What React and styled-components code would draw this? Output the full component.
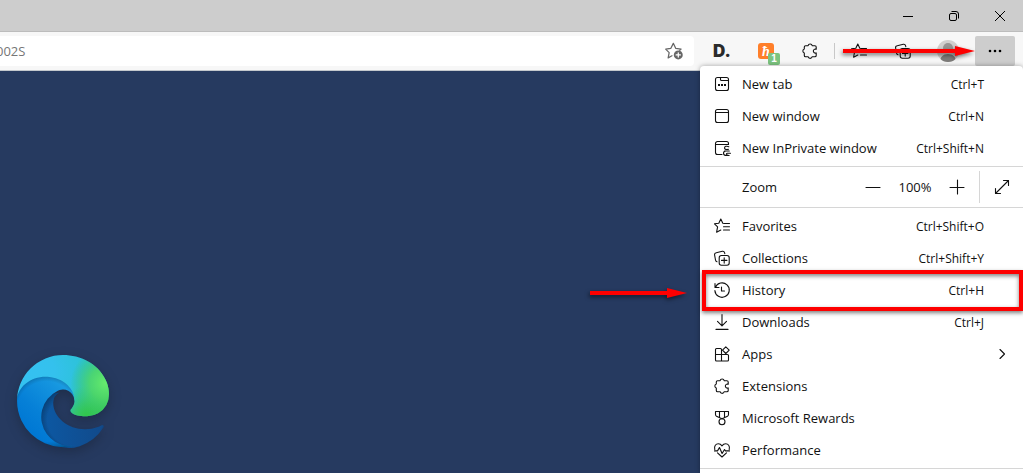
import React from 'react'
import styled, { createGlobalStyle, css } from 'styled-components'

const GlobalStyle = createGlobalStyle`
  * {
    box-sizing: border-box;
  }

  body {
    margin: 0;
    font-family: 'Open Sans', 'Noto Sans', sans-serif;
    font-size: 13px;
    color: #111;
  }

  button, input {
    font: inherit;
    color: inherit;
    border: 0;
    padding: 0;
    background: none;
  }

  svg {
    display: block;
    flex: none;
    overflow: visible;
  }
`

const Browser = styled.div`
  display: flex;
  flex-direction: column;
  min-height: 100vh;
  overflow: hidden;
  background: #263a60;
`

const TitleBar = styled.header`
  display: flex;
  justify-content: flex-end;
  height: 32px;
  background: #cdcdcd;
  border-bottom: 1px solid #bcbcbc;
`

const WindowButton = styled.button`
  display: flex;
  justify-content: center;
  align-items: center;
  width: 46px;
`

const Toolbar = styled.div`
  position: relative;
  display: flex;
  align-items: center;
  height: 39px;
  padding-right: 8px;
  background: #f7f7f7;
  border-bottom: 1px solid #c4c8cd;
`

const AddressBar = styled.form`
  display: flex;
  align-items: center;
  flex: 1;
  height: 30px;
  margin-left: -12px;
  margin-right: 6px;
  padding: 0 8px;
  background: #fff;
  border-radius: 4px;
`

const AddressInput = styled.input`
  flex: 1;
  min-width: 0;
  color: #767676;
  outline: none;
`

const ToolButton = styled.button`
  position: relative;
  display: flex;
  justify-content: center;
  align-items: center;
  width: 44px;
  height: 30px;
`

const StarButton = styled(ToolButton)`
  width: 24px;
  color: #666;
`

const ProfileButton = styled(ToolButton)`
  width: 46px;
`

const MoreButton = styled(ToolButton)`
  width: 40px;
  margin-left: 4px;
  background: #cdcdcd;
  border-radius: 2px;
`

const ToolDivider = styled.span`
  width: 1px;
  height: 16px;
  margin: 0 2px;
  background: #c8c8c8;
`

const Badge = styled.span`
  position: absolute;
  right: 8px;
  bottom: 1px;
  width: 12px;
  height: 12px;
  border-radius: 2px;
  background: #7cc47f;
  color: #fff;
  font: bold 10px/12px 'Liberation Sans', sans-serif;
  text-align: center;
`

const Page = styled.main`
  display: flex;
  flex: 1;
  align-items: flex-end;
  padding: 0 17px 26px;

  svg {
    filter: drop-shadow(0 4px 6px rgba(20, 28, 40, 0.4));
  }
`

const Menu = styled.div`
  position: absolute;
  top: 34px;
  right: 0;
  z-index: 1;
  width: 323px;
  padding-bottom: 4px;
  background: #fff;
  border-radius: 4px 4px 0 0;
  box-shadow: 0 0 5px rgba(0, 0, 0, 0.35);
`

const MenuGroup = styled.div`
  display: flex;
  flex-direction: column;
  padding: 2px 0;
  border-bottom: 1px solid #d6d6d6;
`

const MenuRow = styled.button`
  position: relative;
  display: flex;
  align-items: center;
  gap: 12px;
  height: 32px;
  padding: 0 39px 0 14px;
  text-align: left;

  ${props => props.$marked && css`
    z-index: 1;

    &::after {
      content: '';
      position: absolute;
      inset: -4px 0 -5px 2px;
      border: 4px solid #fe0000;
      box-shadow: 0 2px 4px rgba(0, 0, 0, 0.5), inset 0 2px 4px rgba(0, 0, 0, 0.5);
    }
  `}

  ${props => props.$submenu && css`
    padding-right: 13px;
  `}
`

const Label = styled.span`
  flex: 1;
`

const Shortcut = styled.span`
  font-size: 12px;
`

const ZoomRow = styled.div`
  display: flex;
  align-items: center;
  height: 41px;
  padding-left: 42px;
  border-bottom: 1px solid #d6d6d6;
`

const ZoomButton = styled.button`
  display: flex;
  justify-content: center;
  align-items: center;
  width: 32px;
  height: 32px;
`

const ZoomValue = styled.output`
  width: 52px;
  text-align: center;
`

const FullScreenButton = styled(ZoomButton)`
  width: 44px;
  margin-left: 6px;
  border-left: 1px solid #d6d6d6;
`

const Pointer = styled.svg`
  position: absolute;
  top: 14px;
  z-index: 2;
  pointer-events: none;
  filter: drop-shadow(-1px 2px 2px rgba(0, 0, 0, 0.55));
`

const MorePointer = styled(Pointer)`
  right: 48px;
`

const RowPointer = styled(Pointer)`
  right: 336px;
`

const Icon = ({ size = 16, children }) => (
  <svg
    width={size}
    height={size}
    viewBox="0 0 16 16"
    fill="none"
    stroke="currentColor"
    strokeWidth="1.1"
    strokeLinecap="round"
    strokeLinejoin="round"
    aria-hidden="true"
  >
    {children}
  </svg>
)

const icons = {
  newTab: (
    <>
      <rect x="1.5" y="1.5" width="13" height="13" rx="2" />
      <path d="M6.5 1.5v2a1 1 0 0 0 1 1h7" />
      <path d="M4 9h2M7 9h2M10 9h2" strokeWidth="1.8" strokeLinecap="butt" />
    </>
  ),
  newWindow: (
    <>
      <rect x="1.5" y="1.5" width="13" height="13" rx="2" />
      <path d="M1.5 4.5h13" />
    </>
  ),
  inPrivate: (
    <>
      <path d="M8 14.5H3.5a2 2 0 0 1-2-2v-9a2 2 0 0 1 2-2h9a2 2 0 0 1 2 2v1M1.5 4.5h13" />
      <path d="M14.8 6.7c-2-1-4.3-.4-4.3 1.3s2 1.6 4 1.3M10.5 11h4.8M9.5 13.2c0-1.2.8-2.2 2.4-2.2M9.5 13.2c0 1.6 1.5 2.3 3.4 2.3M16.5 13.2h-3.2c-1.2 0-1.2 2.3 1.8 2.3" />
    </>
  ),
  favorites: (
    <path d="M10.5 5.5 8.8 5.2 6.8 1 4.8 5.2.5 5.8l3.1 3-1 5.4 4.2-2.1M10.5 5.5h5M9.5 8.8h6M9.5 12h6" />
  ),
  collections: (
    <>
      <path d="M3 11.8A2.2 2.2 0 0 1 1.5 10L.6 5a2 2 0 0 1 1.6-2.3L8.3 1.3a2 2 0 0 1 2.3 1.5l.2.8" />
      <rect x="5.2" y="5.5" width="10" height="9.8" rx="2.2" />
      <path d="M10.2 7.7v5.4M7.5 10.4h5.4" />
    </>
  ),
  history: (
    <>
      <path d="M1 1.5v4h4M1.4 5.4A7.2 7.2 0 1 1 .9 8.6" />
      <path d="M7.5 5v4h3" />
    </>
  ),
  downloads: <path d="M8 .5v11M3.5 7.3 8 11.8l4.5-4.5M2 15.4h12" />,
  apps: (
    <>
      <path d="M7.5 8.5V3.5a1 1 0 0 0-1-1h-4a1 1 0 0 0-1 1V14a1 1 0 0 0 1 1h11a1 1 0 0 0 1-1V9.5a1 1 0 0 0-1-1h-12M7.5 8.5V15" />
      <path d="m11.8.8 3.4 3.3-3.4 3.4-3.3-3.4z" />
    </>
  ),
  extensions: (
    <path d="M3.6 2.7h2.5a2.1 2.1 0 0 1 4.1 0h2.7a1.3 1.3 0 0 1 1.3 1.3v2.3a2 2 0 1 0 0 3.6v2.5a1.3 1.3 0 0 1-1.3 1.3h-2.7a2.1 2.1 0 0 1-4.1 0H3.6a1.3 1.3 0 0 1-1.3-1.3V10a2.1 2.1 0 0 1 0-4V4a1.3 1.3 0 0 1 1.3-1.3z" />
  ),
  rewards: (
    <>
      <path d="M1.5 1.5h13v3a2 2 0 0 1-1 1.7L8 8.8 2.5 6.2a2 2 0 0 1-1-1.7zM5.5 1.5v6M10.5 1.5v6" />
      <circle cx="8" cy="11.8" r="3" />
    </>
  ),
  performance: (
    <>
      <path d="M.8 7.5C-.2 3.8 2 1.8 4.3 1.8c1.7 0 2.8.8 3.7 2.1.9-1.3 2-2.1 3.7-2.1 2.3 0 4.5 2 3.5 5.7M3.5 10.8 8 15l4.5-4.2" />
      <path d="M.5 8.9h3l2-3.4 2.6 6 2.4-4 1 1.4h4" />
    </>
  )
}

const firstGroup = [
  { icon: 'newTab', name: 'New tab', keys: 'Ctrl+T' },
  { icon: 'newWindow', name: 'New window', keys: 'Ctrl+N' },
  { icon: 'inPrivate', name: 'New InPrivate window', keys: 'Ctrl+Shift+N' }
]

const secondGroup = [
  { icon: 'favorites', name: 'Favorites', keys: 'Ctrl+Shift+O' },
  { icon: 'collections', name: 'Collections', keys: 'Ctrl+Shift+Y' },
  { icon: 'history', name: 'History', keys: 'Ctrl+H', marked: true },
  { icon: 'downloads', name: 'Downloads', keys: 'Ctrl+J' },
  { icon: 'apps', name: 'Apps', submenu: true },
  { icon: 'extensions', name: 'Extensions' },
  { icon: 'rewards', name: 'Microsoft Rewards' },
  { icon: 'performance', name: 'Performance' }
]

const MenuItem = ({ item }) => (
  <MenuRow type="button" $marked={item.marked} $submenu={item.submenu}>
    <Icon>{icons[item.icon]}</Icon>
    <Label>{item.name}</Label>
    {item.keys && <Shortcut>{item.keys}</Shortcut>}
    {item.submenu && (
      <Icon>
        <path d="m6 3.5 4.5 4.5L6 12.5" />
      </Icon>
    )}
    {item.marked && (
      <RowPointer width="97" height="10" viewBox="0 0 97 10" fill="#fe0000" aria-hidden="true">
        <path d="M0 3h77V0l20 5-20 5V7H0z" />
      </RowPointer>
    )}
  </MenuRow>
)

const EdgeLogo = () => (
  <svg width="92" height="92" viewBox="0 0 256 256" role="img" aria-label="Microsoft Edge">
    <defs>
      <linearGradient id="deep" x1="64" y1="177" x2="241" y2="177" gradientUnits="userSpaceOnUse">
        <stop offset="0" stopColor="#0c59a4" />
        <stop offset="1" stopColor="#114a8b" />
      </linearGradient>
      <radialGradient id="deepShade" cx="161" cy="181" r="95" gradientTransform="matrix(1 0 0 .95 0 9)" gradientUnits="userSpaceOnUse">
        <stop offset=".8" stopColor="#000" stopOpacity="0" />
        <stop offset="1" stopColor="#000" stopOpacity=".25" />
      </radialGradient>
      <linearGradient id="wave" x1="157" y1="100" x2="46" y2="221" gradientUnits="userSpaceOnUse">
        <stop offset="0" stopColor="#1b9de2" />
        <stop offset=".16" stopColor="#1595df" />
        <stop offset=".67" stopColor="#0680d7" />
        <stop offset="1" stopColor="#0078d4" />
      </linearGradient>
      <radialGradient id="waveShade" cx="82" cy="157" r="110" gradientUnits="userSpaceOnUse">
        <stop offset=".76" stopColor="#000" stopOpacity="0" />
        <stop offset=".95" stopColor="#000" stopOpacity=".25" />
        <stop offset="1" stopColor="#000" stopOpacity=".35" />
      </radialGradient>
      <radialGradient id="crest" cx="26" cy="47" r="202" gradientTransform="rotate(92 26 47) scale(1 1.32) translate(0 -11)" gradientUnits="userSpaceOnUse">
        <stop offset="0" stopColor="#35c1f1" />
        <stop offset=".3" stopColor="#34c1ed" />
        <stop offset=".5" stopColor="#2fc2df" />
        <stop offset=".7" stopColor="#2bc3d2" />
        <stop offset="1" stopColor="#36c752" />
      </radialGradient>
      <radialGradient id="glow" cx="246" cy="78" r="97" gradientUnits="userSpaceOnUse">
        <stop offset="0" stopColor="#66eb6e" />
        <stop offset=".45" stopColor="#50d863" stopOpacity=".85" />
        <stop offset="1" stopColor="#36c752" stopOpacity="0" />
      </radialGradient>
      <radialGradient id="tip" cx="193" cy="166" r="80" gradientUnits="userSpaceOnUse">
        <stop offset="0" stopColor="#31c64c" />
        <stop offset=".4" stopColor="#36c752" stopOpacity=".7" />
        <stop offset="1" stopColor="#36c752" stopOpacity="0" />
      </radialGradient>
      <path id="deepPath" d="M235.7 195.5a93.7 93.7 0 0 1-10.6 4.7 101.9 101.9 0 0 1-35.9 6.4c-47.3 0-88.5-32.5-88.5-74.3a31.5 31.5 0 0 1 16.4-27.3c-42.8 1.8-53.8 46.4-53.8 72.5 0 74 68.1 81.4 82.8 81.4 7.9 0 19.8-2.3 27-4.6l1.3-.4a128.3 128.3 0 0 0 66.6-52.8 4 4 0 0 0-5.3-5.6z" />
      <path id="wavePath" d="M105.7 241.4a79.2 79.2 0 0 1-22.7-21.3 80.7 80.7 0 0 1 29.5-120c3.2-1.5 8.5-4.1 15.6-4a32.4 32.4 0 0 1 25.7 13 31.9 31.9 0 0 1 6.3 18.7c0-.2 24.5-79.6-80-79.6-43.9 0-80 41.6-80 78.2a130.2 130.2 0 0 0 12.1 56 128 128 0 0 0 156.4 67 75.5 75.5 0 0 1-62.8-8z" />
      <path id="crestPath" d="M152.3 148.9c-.9 1-3.4 2.5-3.4 5.6 0 2.6 1.7 5.2 4.8 7.3 14.3 10 41.4 8.6 41.5 8.6a59.6 59.6 0 0 0 30.3-8.3 61.4 61.4 0 0 0 30.4-52.9c.3-22.4-8-37.3-11.3-43.9C223.5 23.9 177.7 0 128 0A128 128 0 0 0 0 126.2c.5-36.5 36.8-66 80-66 3.5 0 23.5.3 42 10 16.3 8.6 24.9 19 30.8 29.2 6.2 10.7 7.3 24.2 7.3 29.5s-2.7 13.3-7.8 19.9z" />
    </defs>
    <use href="#deepPath" fill="url(#deep)" />
    <use href="#deepPath" fill="url(#deepShade)" />
    <use href="#wavePath" fill="url(#wave)" />
    <use href="#wavePath" fill="url(#waveShade)" />
    <use href="#crestPath" fill="url(#crest)" />
    <use href="#crestPath" fill="url(#tip)" />
    <use href="#crestPath" fill="url(#glow)" />
  </svg>
)

const LetterLogo = () => (
  <svg width="20" height="20" viewBox="0 0 20 20" aria-hidden="true">
    <text x="10" y="16" fill="#2b2b2b" textAnchor="middle" fontFamily="Inter, sans-serif" fontWeight="900" fontSize="17">D.</text>
  </svg>
)

const CouponLogo = () => (
  <svg width="16" height="16" viewBox="0 0 16 16" aria-hidden="true">
    <rect width="16" height="16" rx="3" fill="#ff7f2a" />
    <text x="8" y="13" fill="#fff" textAnchor="middle" fontFamily="Liberation Serif, serif" fontStyle="italic" fontWeight="bold" fontSize="14">ħ</text>
  </svg>
)

const Avatar = () => (
  <svg width="22" height="22" viewBox="0 0 22 22" aria-hidden="true">
    <clipPath id="face">
      <circle cx="11" cy="11" r="11" />
    </clipPath>
    <g clipPath="url(#face)">
      <rect width="22" height="22" fill="#d2d0ce" />
      <circle cx="11" cy="8" r="5" fill="#979593" />
      <path d="M3 22c0-5 3-8 8-8s8 3 8 8z" fill="#7d7b79" />
    </g>
  </svg>
)

function App() {
  return (
    <Browser>
      <GlobalStyle />
      <TitleBar>
        <WindowButton type="button" aria-label="Minimize">
          <svg width="10" height="10" viewBox="0 0 10 10" stroke="#000"><path d="M0 5.5h10" /></svg>
        </WindowButton>
        <WindowButton type="button" aria-label="Restore">
          <svg width="10" height="10" viewBox="0 0 10 10" fill="none" stroke="#000">
            <rect x=".5" y="2.5" width="7" height="7" rx="1.5" />
            <path d="M2.5.5H7A2.5 2.5 0 0 1 9.5 3v4.5" />
          </svg>
        </WindowButton>
        <WindowButton type="button" aria-label="Close">
          <svg width="10" height="10" viewBox="0 0 10 10" stroke="#000"><path d="m0 0 10 10M10 0 0 10" /></svg>
        </WindowButton>
      </TitleBar>

      <Toolbar>
        <AddressBar>
          <AddressInput type="text" aria-label="Address" defaultValue="002S" />
          <StarButton type="button" aria-label="Add to favorites">
            <Icon size={18}>
              <path d="m6.2 12.2-3.4 1.9.9-4.7L.6 6.3l4.5-.6L7.4 1.2l2.2 4.5 4.7.6-1.2 1.1" />
              <circle cx="11.8" cy="11.5" r="4" fill="currentColor" stroke="none" />
              <path d="M11.8 9.6v3.8M9.9 11.5h3.8" stroke="#fff" />
            </Icon>
          </StarButton>
        </AddressBar>
        <ToolButton type="button" aria-label="Dashlane"><LetterLogo /></ToolButton>
        <ToolButton type="button" aria-label="Honey">
          <CouponLogo />
          <Badge>1</Badge>
        </ToolButton>
        <ToolButton type="button" aria-label="Extensions"><Icon>{icons.extensions}</Icon></ToolButton>
        <ToolDivider />
        <ToolButton type="button" aria-label="Favorites"><Icon>{icons.favorites}</Icon></ToolButton>
        <ToolButton type="button" aria-label="Collections"><Icon>{icons.collections}</Icon></ToolButton>
        <ProfileButton type="button" aria-label="Profile"><Avatar /></ProfileButton>
        <MoreButton type="button" aria-label="Settings and more">
          <svg width="14" height="4" viewBox="0 0 14 4">
            <circle cx="2" cy="2" r="1.3" />
            <circle cx="7" cy="2" r="1.3" />
            <circle cx="12" cy="2" r="1.3" />
          </svg>
        </MoreButton>
        <MorePointer width="132" height="10" viewBox="0 0 132 10" fill="#fe0000" aria-hidden="true">
          <path d="M0 3h112V0l20 5-20 5V7H0z" />
        </MorePointer>

        <Menu>
          <MenuGroup>
            {firstGroup.map(item => <MenuItem key={item.name} item={item} />)}
          </MenuGroup>
          <ZoomRow>
            <Label>Zoom</Label>
            <ZoomButton type="button" aria-label="Zoom out">
              <Icon><path d="M1 8.5h14" /></Icon>
            </ZoomButton>
            <ZoomValue>100%</ZoomValue>
            <ZoomButton type="button" aria-label="Zoom in">
              <Icon><path d="M1 8.5h14M8.5 1v14" /></Icon>
            </ZoomButton>
            <FullScreenButton type="button" aria-label="Full screen">
              <Icon><path d="m1.5 14.5 13-13M9.5 1.5h5v5M1.5 9.5v5h5" /></Icon>
            </FullScreenButton>
          </ZoomRow>
          <MenuGroup>
            {secondGroup.map(item => <MenuItem key={item.name} item={item} />)}
          </MenuGroup>
        </Menu>
      </Toolbar>

      <Page>
        <EdgeLogo />
      </Page>
    </Browser>
  )
}

export default App
